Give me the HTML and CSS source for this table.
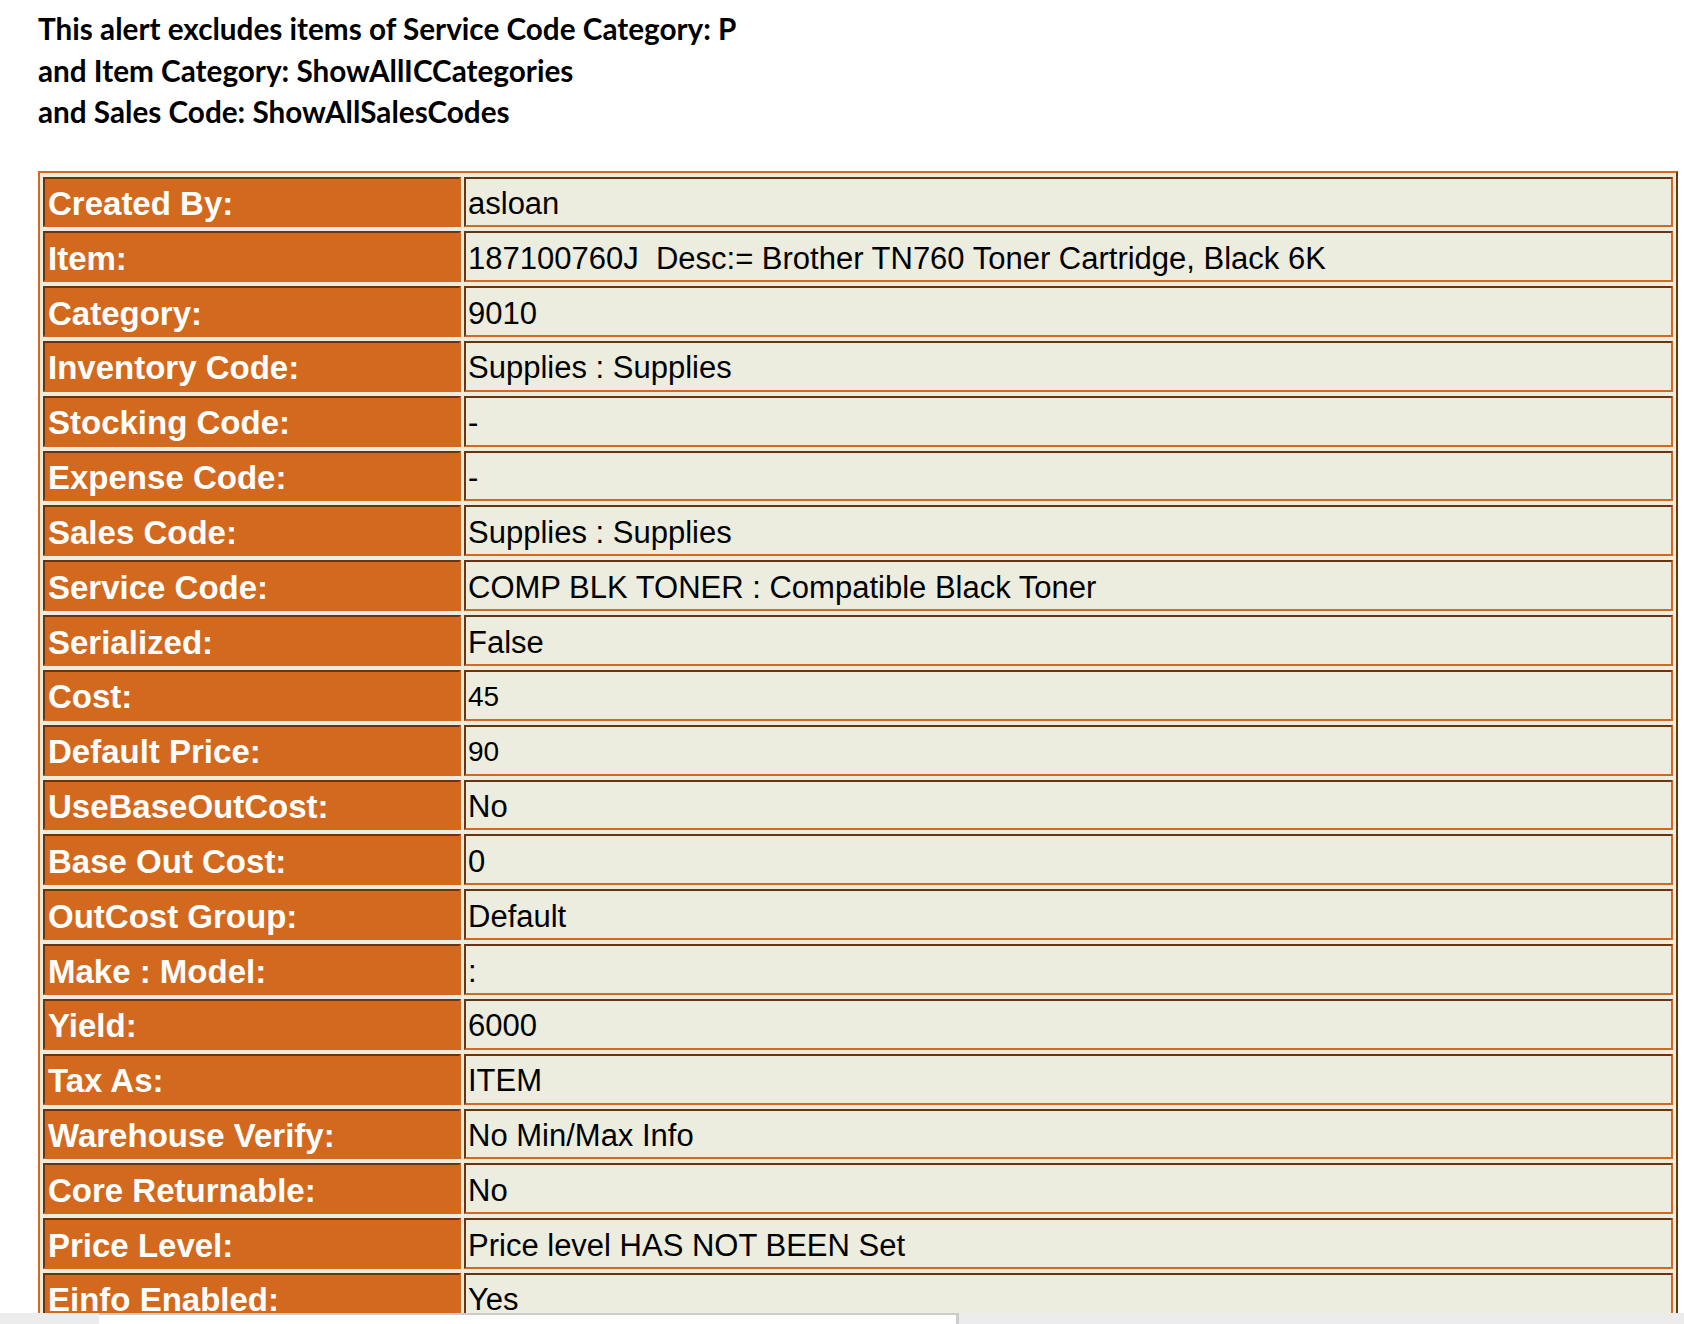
FILE: index.html
```html
<!DOCTYPE html>
<html>
<head>
<meta charset="utf-8">
<title>Item Alert</title>
<link rel="stylesheet" href="styles.css">
</head>
<body>
<div class="page">
  <div class="notice">
    <p>This alert excludes items of Service Code Category: P</p>
    <p>and Item Category: ShowAllICCategories</p>
    <p>and Sales Code: ShowAllSalesCodes</p>
  </div>
  <table class="details">
    <tr><th>Created By:</th><td>asloan</td></tr>
    <tr><th>Item:</th><td>187100760J&nbsp; Desc:= Brother TN760 Toner Cartridge, Black 6K</td></tr>
    <tr><th>Category:</th><td>9010</td></tr>
    <tr><th>Inventory Code:</th><td>Supplies : Supplies</td></tr>
    <tr><th>Stocking Code:</th><td>-</td></tr>
    <tr><th>Expense Code:</th><td>-</td></tr>
    <tr><th>Sales Code:</th><td>Supplies : Supplies</td></tr>
    <tr><th>Service Code:</th><td>COMP BLK TONER : Compatible Black Toner</td></tr>
    <tr><th>Serialized:</th><td>False</td></tr>
    <tr><th>Cost:</th><td class="small">45</td></tr>
    <tr><th>Default Price:</th><td class="small">90</td></tr>
    <tr><th>UseBaseOutCost:</th><td>No</td></tr>
    <tr><th>Base Out Cost:</th><td>0</td></tr>
    <tr><th>OutCost Group:</th><td>Default</td></tr>
    <tr><th>Make : Model:</th><td>:</td></tr>
    <tr><th>Yield:</th><td>6000</td></tr>
    <tr><th>Tax As:</th><td>ITEM</td></tr>
    <tr><th>Warehouse Verify:</th><td>No Min/Max Info</td></tr>
    <tr><th>Core Returnable:</th><td>No</td></tr>
    <tr><th>Price Level:</th><td>Price level HAS NOT BEEN Set</td></tr>
    <tr><th>Einfo Enabled:</th><td>Yes</td></tr>
    <tr><th>Einfo Note:</th><td>-</td></tr>
  </table>
</div>
<div class="hscroll"><div class="thumb"></div></div>
</body>
</html>
```
FILE: styles.css
```css
html, body {
  height: 1324px;
  overflow: hidden;
}
body {
  margin: 0;
  background: #ffffff;
  color: #000000;
}
.page {
  padding: 8px 0 0 38px;
}
.notice {
  font-family: Lato, "Liberation Sans", sans-serif;
  font-weight: 700;
  font-size: 29.7px;
  line-height: 41.5px;
  margin-bottom: 38px;
}
.notice p {
  margin: 0;
}
.details {
  width: 1640px;
  border-collapse: separate;
  border-spacing: 3px 4px;
  background: #eceddf;
  border-style: solid;
  border-width: 2px;
  border-color: #d2691e #6b3410 #6b3410 #d2691e;
}
.details th,
.details td {
  height: 50.84px;
  box-sizing: border-box;
  border-style: solid;
  border-width: 2px;
  border-color: #6b3410 #d2691e #d2691e #6b3410;
  padding: 4px 3px 0 3px;
  vertical-align: middle;
  text-align: left;
  white-space: nowrap;
}
.details th {
  width: 418px;
  background: #d2691e;
  color: #ffffff;
  font-family: "Liberation Sans", Arial, sans-serif;
  font-weight: 700;
  font-size: 33px;
}
.details td {
  background: #eceddf;
  color: #000000;
  font-family: "Liberation Sans", Arial, sans-serif;
  font-weight: 400;
  font-size: 31px;
  padding-left: 2px;
}
.details td.small {
  font-size: 28px;
}
.hscroll {
  position: fixed;
  left: 0;
  right: 0;
  bottom: 0;
  height: 11px;
  background: #ececec;
}
.thumb {
  position: absolute;
  left: 99px;
  top: 0;
  bottom: 0;
  width: 857px;
  background: #ffffff;
  border-top: 2px solid #cccccc;
  border-right: 3px solid #cccccc;
}
```
